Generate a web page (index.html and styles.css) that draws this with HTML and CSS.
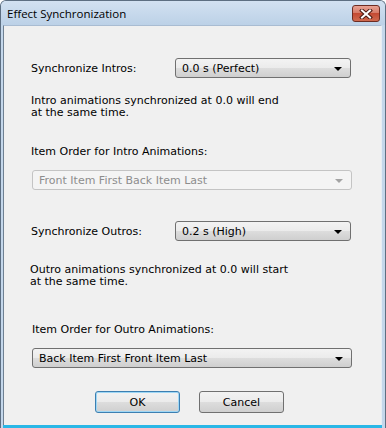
FILE: index.html
```html
<!DOCTYPE html>
<html lang="en">
<head>
  <meta charset="UTF-8">
  <title>Effect Synchronization</title>
  <link rel="stylesheet" href="styles.css">
</head>
<body>
  <div class="window">
    <div class="titlebar">
      <span class="title">Effect Synchronization</span>
      <div class="close-btn">
        <svg width="14" height="10" viewBox="0 0 14 10">
          <path d="M3 1.5 L11 8.5 M11 1.5 L3 8.5" stroke="#4a1a12" stroke-width="4" stroke-linecap="square"/>
          <path d="M3 1.5 L11 8.5 M11 1.5 L3 8.5" stroke="#ffffff" stroke-width="2" stroke-linecap="square"/>
        </svg>
      </div>
    </div>

    <div class="client">
      <div class="row row-intro">
        <span class="label">Synchronize Intros:</span>
        <div class="combo combo-short">
          <span>0.0 s (Perfect)</span>
          <span class="arrow"></span>
        </div>
      </div>
      <p class="desc desc-intro">Intro animations synchronized at 0.0 will end<br>at the same time.</p>

      <p class="heading heading-intro">Item Order for Intro Animations:</p>
      <div class="combo combo-wide disabled">
        <span>Front Item First Back Item Last</span>
        <span class="arrow"></span>
      </div>

      <div class="row row-outro">
        <span class="label">Synchronize Outros:</span>
        <div class="combo combo-short">
          <span>0.2 s (High)</span>
          <span class="arrow"></span>
        </div>
      </div>
      <p class="desc desc-outro">Outro animations synchronized at 0.0 will start<br>at the same time.</p>

      <p class="heading heading-outro">Item Order for Outro Animations:</p>
      <div class="combo combo-wide">
        <span>Back Item First Front Item Last</span>
        <span class="arrow"></span>
      </div>

      <div class="buttons">
        <button class="btn btn-default">OK</button>
        <button class="btn">Cancel</button>
      </div>
    </div>
  </div>
</body>
</html>
```

FILE: styles.css
```css
html, body {
  margin: 0;
  padding: 0;
  background: #ffffff;
}
.window {
  width: 386px;
  height: 428px;
  box-sizing: border-box;
  border: 1px solid #5d6f82;
  border-bottom: none;
  border-radius: 6px 6px 0 0;
  background: #c4d7eb;
  padding: 0 3px 0 2px;
  display: flex;
  flex-direction: column;
  font-family: "DejaVu Sans", sans-serif;
}
.titlebar {
  height: 24px;
  display: flex;
  align-items: center;
  justify-content: space-between;
  background: linear-gradient(#d2e1f1, #bcd1e7);
  margin: 0 -3px 0 -2px;
  padding: 0 4px 0 6px;
  border-radius: 5px 5px 0 0;
}
.title {
  font-family: "Open Sans", sans-serif;
  font-size: 11.5px;
  color: #000;
  margin-top: 1px;
}
.close-btn {
  width: 28px;
  height: 17px;
  box-sizing: border-box;
  border: 1px solid #6d2c22;
  border-radius: 3px;
  background: linear-gradient(#e8a293 0%, #d77b68 45%, #c44a33 50%, #cf6a4f 100%);
  display: flex;
  align-items: center;
  justify-content: center;
  margin-top: 1px;
  margin-right: 1px;
}
.client {
  flex: 1;
  background: #f0f0f0;
  border-left: 1px solid #6f8092;
  border-top: 1px solid #a9bcd2;
  border-right: 1px solid #e6edf5;
  padding: 0 0 0 27px;
  font-size: 11px;
  color: #000;
  box-shadow: 0 3px 0 #2ab7e6;
  margin-bottom: 3px;
}
.row {
  display: flex;
  align-items: center;
}
.label {
  width: 144px;
  padding-top: 1px;
}
.row-intro {
  margin-top: 32px;
}
.row-outro {
  margin-top: 31px;
}
.desc {
  margin: 0;
  line-height: 12px;
}
.desc-intro {
  margin-top: 17px;
}
.desc-outro {
  margin-top: 23px;
  margin-left: -1px;
}
.heading {
  margin: 0;
  line-height: 13px;
}
.heading-intro {
  margin-top: 26px;
  margin-bottom: 12px;
}
.heading-outro {
  margin-top: 35px;
  margin-bottom: 12px;
  margin-left: 1px;
}
.combo {
  height: 20px;
  box-sizing: border-box;
  border: 1px solid #707070;
  border-radius: 3px;
  background: linear-gradient(#f3f3f3 0%, #ebebeb 50%, #dddddd 51%, #cfcfcf 100%);
  display: flex;
  align-items: center;
  justify-content: space-between;
  padding: 0 8px 0 6px;
}
.combo-short {
  width: 176px;
}
.combo-wide {
  width: 320px;
  margin-left: 1px;
}
.arrow {
  width: 0;
  height: 0;
  border-left: 4px solid transparent;
  border-right: 4px solid transparent;
  border-top: 4px solid #000;
  margin-top: 1px;
}
.combo.disabled {
  border-color: #c4c4c4;
  background: #f4f4f4;
  color: #8d8d8d;
}
.combo.disabled .arrow {
  border-top-color: #a3a3a3;
}
.buttons {
  display: flex;
  gap: 19px;
  margin-top: 23px;
  margin-left: 64px;
}
.btn {
  width: 85px;
  height: 22px;
  box-sizing: border-box;
  border: 1px solid #707070;
  border-radius: 3px;
  background: linear-gradient(#f2f2f2 0%, #ebebeb 50%, #dddddd 51%, #cfcfcf 100%);
  font-family: "DejaVu Sans", sans-serif;
  font-size: 11px;
  color: #000;
  padding: 0;
}
.btn-default {
  border-color: #3c7fb1;
  box-shadow: inset 0 0 0 1px #9fd7f5;
}
```
